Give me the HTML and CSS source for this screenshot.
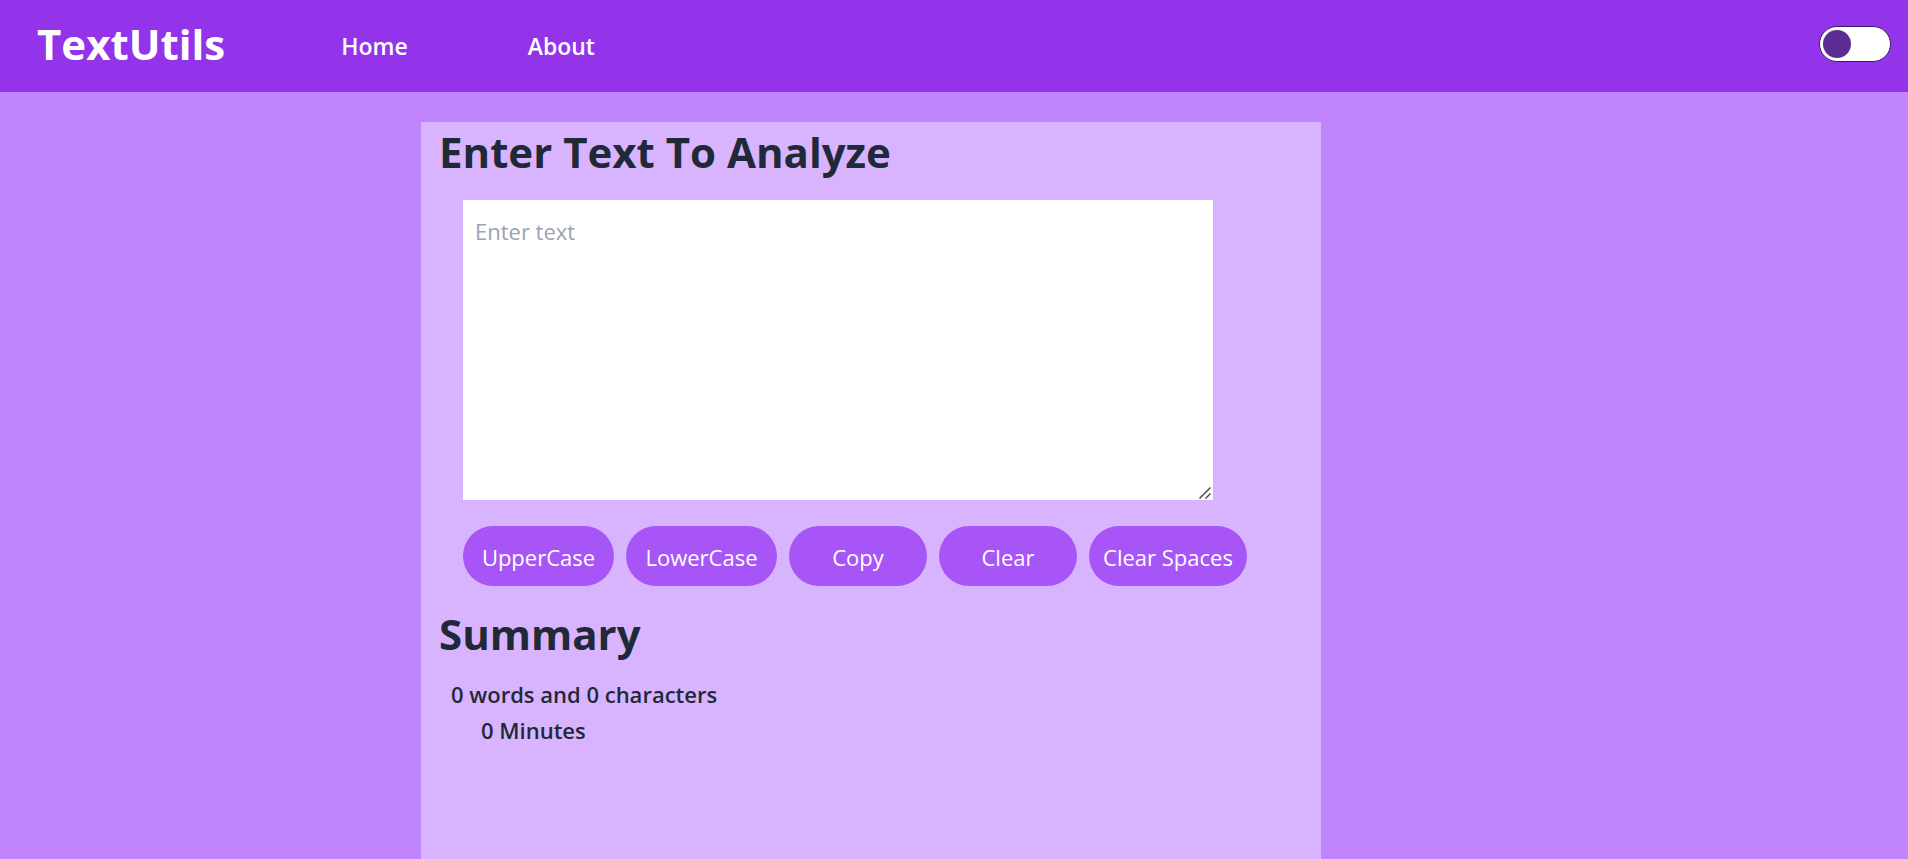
FILE: index.html
```html
<!DOCTYPE html>
<html lang="en">
<head>
<meta charset="utf-8">
<meta name="viewport" content="width=device-width, initial-scale=1">
<title>TextUtils</title>
<link rel="stylesheet" href="styles.css">
</head>
<body>
<header class="navbar">
  <a class="brand" href="#">TextUtils</a>
  <nav class="links">
    <a href="#">Home</a>
    <a href="#">About</a>
  </nav>
  <input class="switch" type="checkbox" role="switch" aria-label="Dark mode">
</header>
<main class="page">
  <section class="panel">
    <h1 class="heading"><label for="text">Enter Text To Analyze</label></h1>
    <textarea class="editor" id="text" placeholder="Enter text"></textarea>
    <div class="actions">
      <button class="wide" type="button">UpperCase</button>
      <button class="wide" type="button">LowerCase</button>
      <button type="button">Copy</button>
      <button type="button">Clear</button>
      <button class="widest" type="button">Clear Spaces</button>
    </div>
    <h2 class="heading">Summary</h2>
    <p class="count">0 words and 0 characters</p>
    <p class="time">0 Minutes</p>
  </section>
</main>
</body>
</html>
```
FILE: styles.css
```css
*, *::before, *::after {
  box-sizing: border-box;
}

body {
  margin: 0;
  min-height: 100vh;
  display: flex;
  flex-direction: column;
  background: #c084fc;
  color: #1f2937;
  font-family: "Segoe UI", "Open Sans", "Noto Sans", sans-serif;
  font-size: 22px;
  line-height: 36px;
}

.navbar {
  display: flex;
  align-items: center;
  min-height: 92px;
  padding: 0 17px 0 37px;
  background: #9333ea;
}

.navbar a {
  color: #fff;
  text-decoration: none;
}

.brand {
  padding-bottom: 4px;
  font-size: 42px;
  font-weight: 700;
  line-height: 60px;
}

.links {
  display: flex;
  gap: 120px;
  margin-left: 116px;
  font-size: 23px;
  font-weight: 600;
}

.switch {
  appearance: none;
  display: flex;
  align-items: center;
  width: 72px;
  height: 36px;
  margin: 0 0 4px auto;
  padding: 0 3px;
  border: 1px solid #3b1a6e;
  border-radius: 18px;
  background: #fff;
  cursor: pointer;
}

.switch::before {
  content: "";
  width: 28px;
  height: 28px;
  border-radius: 50%;
  background: #5b2c91;
}

.switch:checked {
  justify-content: flex-end;
}

.page {
  flex: 1;
  display: flex;
  justify-content: center;
  padding: 30px 166px 0 0;
}

.panel {
  width: 100%;
  max-width: 900px;
  padding: 0 18px;
  background: #d8b4fe;
}

.heading {
  margin: 0;
  font-size: 42px;
  font-weight: 700;
  line-height: 60px;
}

.editor {
  display: block;
  width: 750px;
  max-width: 100%;
  height: 300px;
  margin: 18px 0 26px 24px;
  padding: 13px 12px;
  border: 0;
  background: #fff;
  color: inherit;
  font: inherit;
}

.editor::placeholder {
  color: #9ca3af;
}

.editor::-webkit-resizer {
  background: url("data:image/svg+xml,%3Csvg xmlns='http://www.w3.org/2000/svg' width='15' height='15'%3E%3Cpath d='M1.5 13.5 12.5 2.5M7.5 13.5 12.5 8.5' stroke='%23555' stroke-width='1.6'/%3E%3C/svg%3E") no-repeat right bottom;
}

.actions {
  display: flex;
  flex-wrap: wrap;
  gap: 12px;
  margin: 0 0 18px 24px;
}

.actions button {
  min-width: 138px;
  height: 60px;
  padding: 2px 0 0;
  border: 0;
  border-radius: 30px;
  background: #a855f7;
  color: #fff;
  font: inherit;
  cursor: pointer;
}

.actions .wide {
  min-width: 151px;
}

.actions .widest {
  min-width: 158px;
}

.count,
.time {
  margin: 0;
  font-weight: 600;
}

.count {
  padding: 12px 0 0 12px;
}

.time {
  padding-left: 42px;
}
```
